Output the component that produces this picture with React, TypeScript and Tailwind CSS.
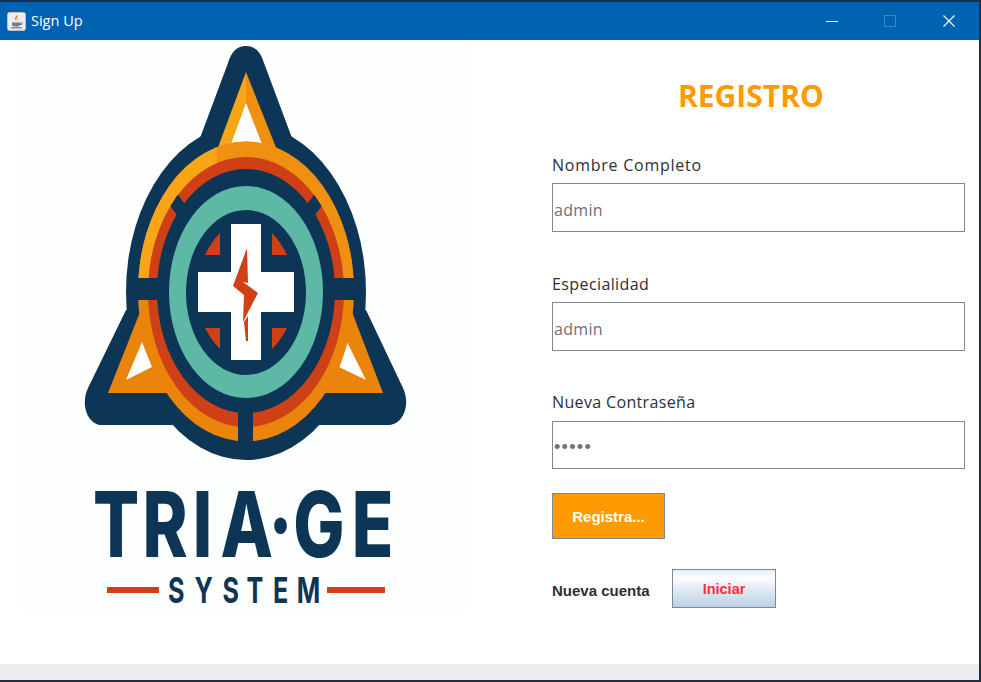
import React from "react";

const NAVY = "#0d3556";
const RED = "#cf4016";
const TEAL = "#5db8a5";

function Logo() {
  return (
    <svg width="446" height="573" viewBox="22 40 446 573" className="block bg-[#fdfefe]">
      <defs>
        <clipPath id="redRing"><ellipse cx="246" cy="292" rx="98" ry="135" /></clipPath>
        <clipPath id="orangeRing"><ellipse cx="246" cy="291.5" rx="108" ry="150" /></clipPath>
      </defs>
      {/* silhouette */}
      <ellipse cx="246" cy="292" rx="120" ry="168" fill={NAVY} />
      <path
        fill={NAVY}
        d="M246 46 C256 46 261 53 264 63 L292 138 L300 300 L366 310 L403 388 C411 405 403 425 388 425 L102 425 C88 425 80 405 88 388 L126 310 L190 300 L200 138 L228 63 C231 53 236 46 246 46 Z"
      />
      {/* top triangle */}
      <polygon points="246,72 217,150 246,150" fill="#f8a618" />
      <polygon points="246,72 277,150 246,150" fill="#ef9010" />
      <polygon points="246,103 231,144 262,144" fill="#ffffff" />
      {/* lower triangles */}
      <polygon points="140,312 108,393 167,393 150,330" fill="#ea840b" />
      <polygon points="352,312 383,393 325,393 342,330" fill="#ea840b" />
      <polygon points="142,342 152,367 126,380" fill="#ffffff" />
      <polygon points="347,342 339,367 366,380" fill="#ffffff" />
      {/* rings */}
      <ellipse cx="246" cy="291.5" rx="108" ry="150" fill="#ea840b" />
      <g clipPath="url(#orangeRing)">
        <rect x="130" y="130" width="87" height="160" fill="#f8a618" />
        <rect x="217" y="130" width="150" height="160" fill="#ef9010" />
      </g>
      <ellipse cx="246" cy="292" rx="98" ry="135" fill={RED} />
      <g clipPath="url(#redRing)" stroke={NAVY} strokeWidth="13">
        <line x1="160" y1="181" x2="190" y2="222" />
        <line x1="332" y1="181" x2="302" y2="222" />
      </g>
      <rect x="130" y="278" width="232" height="22" fill={NAVY} />
      <rect x="238" y="405" width="15" height="38" fill={NAVY} />
      <ellipse cx="246" cy="291" rx="89" ry="122" fill={NAVY} />
      <ellipse cx="246" cy="292" rx="77" ry="106" fill={TEAL} />
      <ellipse cx="246" cy="292.5" rx="60" ry="82.5" fill={NAVY} />
      {/* quadrants */}
      <path d="M205 255 Q211 242 220 233 L220 255 Z" fill={RED} />
      <path d="M287 255 Q281 242 272 233 L272 255 Z" fill={RED} />
      <path d="M205 328 L220 328 L220 349 Q211 340 205 328 Z" fill={RED} />
      <path d="M287 328 L272 328 L272 349 Q281 340 287 328 Z" fill={RED} />
      {/* cross */}
      <rect x="231" y="224" width="30" height="136" fill="#ffffff" />
      <rect x="198" y="272" width="96" height="40" fill="#ffffff" />
      {/* bolt */}
      <path d="M247 248 L248 283 L243 282 L258 293 L243 322 L244 295 L233 286 Z" fill={RED} />
      <path d="M248 316 L248 341 L246 341 L244 322 Z" fill={RED} />
      {/* wordmark */}
      <g transform="scale(0.75 1)">
        <text
          x="124 190 257 294 358 391 469"
          y="557"
          fill={NAVY}
          fontFamily="Inter, 'Liberation Sans', sans-serif"
          fontWeight="800"
          fontSize="91"
        >
          TRIA·GE
        </text>
      </g>
      <g transform="scale(0.7 1)">
        <text
          x="240 278 318 352 390 424"
          y="603"
          fill={NAVY}
          fontFamily="Inter, 'Liberation Sans', sans-serif"
          fontWeight="700"
          fontSize="36"
        >
          SYSTEM
        </text>
      </g>
      <rect x="107" y="587" width="52" height="6" fill={RED} />
      <rect x="327" y="587" width="58" height="6" fill={RED} />
    </svg>
  );
}

function JavaIcon() {
  return (
    <svg width="19" height="19" viewBox="0 0 19 19" className="block">
      <rect x="0.5" y="0.5" width="18" height="18" rx="2" fill="#eceef2" stroke="#b9bdc6" />
      <path d="M10 3 C12 5 8 6 9.5 9 C8 7 7 6.5 10 3 Z" fill="#e2711d" />
      <path d="M12 5.5 C11 7 10.5 8 11 9.5 C10 8 10.5 6.5 12 5.5 Z" fill="#e2711d" />
      <path d="M5 10.5 H13 V12.5 C13 14 11.5 14.5 9 14.5 C6.5 14.5 5 14 5 12.5 Z" fill="#6e7b88" />
      <path d="M13 11 H15 V12.5 H13" fill="none" stroke="#6e7b88" />
      <rect x="4" y="15.2" width="11" height="1.2" fill="#6e7b88" />
    </svg>
  );
}

function Field({ label, value, mt, track, dots }: { label: string; value: string; mt: string; track: string; dots?: boolean }) {
  return (
    <div className={mt}>
      <div className={`h-[22px] leading-[22px] text-[16px] text-[#2b2f38] font-['Open_Sans',sans-serif] ${track}`}>
        {label}
      </div>
      <div
        className={
          dots
            ? "mt-[8px] h-[48px] border border-[#7a8a99] bg-white flex items-center pl-[1px] pt-[4px] text-[18px] tracking-[1.3px] text-[#6d7075] font-['Liberation_Sans',sans-serif]"
            : "mt-[7px] h-[49px] border border-[#7a8a99] bg-white flex items-center pl-[1px] pt-[4px] text-[16px] tracking-[0.3px] text-[#6d7075] font-['Open_Sans',sans-serif]"
        }
      >
        {value}
      </div>
    </div>
  );
}

export default function App() {
  return (
    <div className="w-[981px] h-[682px] bg-[#23303c] pt-[2px] pr-[2px] pb-[2px] flex flex-col overflow-hidden">
      <div className="h-[38px] bg-[#0063b1] flex items-center pl-[7px] text-white shrink-0">
        <JavaIcon />
        <span className="ml-[5px] text-[14.5px] font-['Open_Sans',sans-serif]">Sign Up</span>
        <div className="ml-auto flex items-center">
          <div className="w-[12px] h-[1px] bg-white" />
          <div className="ml-[46px] w-[12px] h-[12px] border border-[#3f87c6]" />
          <svg className="ml-[47px] mr-[24px]" width="12" height="12" viewBox="0 0 12 12">
            <path d="M0.5 0.5 L11.5 11.5 M11.5 0.5 L0.5 11.5" stroke="#ffffff" strokeWidth="1.1" />
          </svg>
        </div>
      </div>
      <div className="flex-1 bg-white flex pl-[22px]">
        <Logo />
        <div className="ml-[84px] w-[413px]">
          <div className="mt-[36px] pl-[126px] h-[40px] leading-[40px] text-[30px] font-bold text-[#ff9a00] font-['Open_Sans',sans-serif]">
            REGISTRO
          </div>
          <Field label="Nombre Completo" value="admin" mt="mt-[38px]" track="tracking-[0.75px]" />
          <Field label="Especialidad" value="admin" mt="mt-[41px]" track="tracking-[0.4px]" />
          <Field label="Nueva Contraseña" value="•••••" mt="mt-[40px]" track="tracking-[0.35px]" dots />
          <button className="mt-[24px] block w-[113px] h-[46px] pt-[2px] bg-[#ff9a00] border border-[#7a8a99] text-white text-[15px] font-bold font-['Liberation_Sans',sans-serif]">
            Registra...
          </button>
          <div className="mt-[30px] flex items-center">
            <span className="w-[120px] pt-[5px] text-[15px] font-bold text-[#2b2f38] font-['Liberation_Sans',sans-serif]">
              Nueva cuenta
            </span>
            <button className="w-[104px] h-[39px] pt-[3px] border border-[#7a8a99] bg-[linear-gradient(180deg,#e9eff7_0%,#fbfcfe_22%,#dfe8f2_55%,#bcd0e4_100%)] text-[#ff2b3f] text-[14.5px] font-bold font-['Liberation_Sans',sans-serif]">
              Iniciar
            </button>
          </div>
        </div>
      </div>
      <div className="h-[16px] bg-[#eeeeee] shrink-0" />
    </div>
  );
}
